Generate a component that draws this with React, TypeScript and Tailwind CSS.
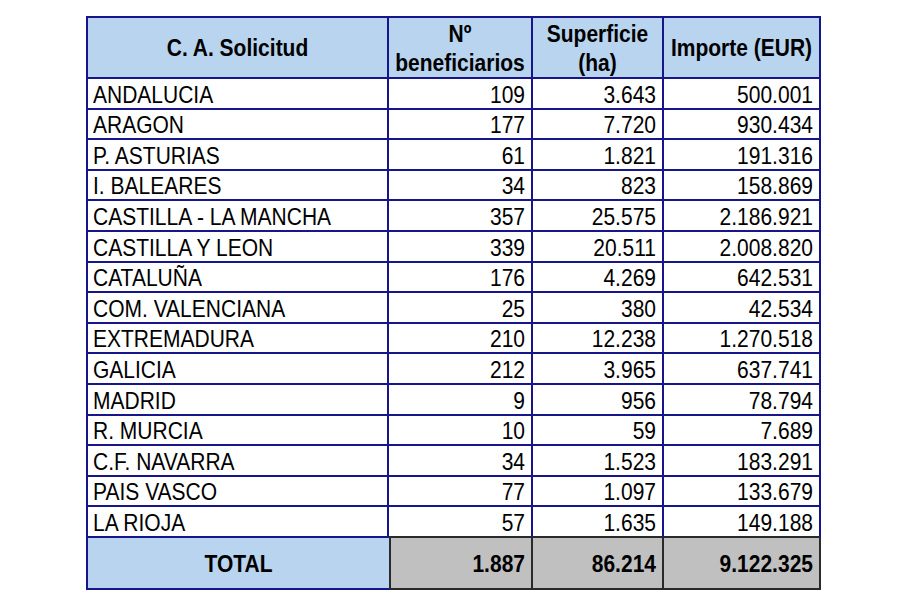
import React from "react";

const rows: [string, string, string, string][] = [
  ["ANDALUCIA", "109", "3.643", "500.001"],
  ["ARAGON", "177", "7.720", "930.434"],
  ["P. ASTURIAS", "61", "1.821", "191.316"],
  ["I. BALEARES", "34", "823", "158.869"],
  ["CASTILLA - LA MANCHA", "357", "25.575", "2.186.921"],
  ["CASTILLA Y LEON", "339", "20.511", "2.008.820"],
  ["CATALUÑA", "176", "4.269", "642.531"],
  ["COM. VALENCIANA", "25", "380", "42.534"],
  ["EXTREMADURA", "210", "12.238", "1.270.518"],
  ["GALICIA", "212", "3.965", "637.741"],
  ["MADRID", "9", "956", "78.794"],
  ["R. MURCIA", "10", "59", "7.689"],
  ["C.F. NAVARRA", "34", "1.523", "183.291"],
  ["PAIS VASCO", "77", "1.097", "133.679"],
  ["LA RIOJA", "57", "1.635", "149.188"],
];

const heights = [31, 30, 31, 30, 31, 31, 30, 31, 30, 31, 31, 30, 31, 30, 31];

function T({ children }: { children: React.ReactNode }) {
  return <span className="inline-block scale-y-[1.13]">{children}</span>;
}

export default function App() {
  return (
    <div
      className="w-[900px] h-[600px] bg-white pt-[16px] pl-[86px] text-black"
      style={{ fontFamily: '"Liberation Sans", Arial, sans-serif' }}
    >
      <div className="grid grid-cols-[303px_144px_131px_157px] w-[735px] text-[21px]">
        {/* header */}
        <div className="h-[63px] bg-[#b8d4ee] border-l-2 border-t-2 border-r-2 border-b-2 border-[#16168a] flex items-center justify-center font-bold leading-[29px]">
          <T>C. A. Solicitud</T>
        </div>
        <div className="h-[63px] bg-[#b8d4ee] border-t-2 border-r-2 border-b-2 border-[#16168a] flex flex-col items-center justify-center font-bold leading-[29px]">
          <T>Nº</T>
          <T>beneficiarios</T>
        </div>
        <div className="h-[63px] bg-[#b8d4ee] border-t-2 border-r-2 border-b-2 border-[#16168a] flex flex-col items-center justify-center font-bold leading-[29px]">
          <T>Superficie</T>
          <T>(ha)</T>
        </div>
        <div className="h-[63px] bg-[#b8d4ee] border-t-2 border-r-2 border-b-2 border-[#16168a] flex items-center justify-center font-bold leading-[29px]">
          <T>Importe (EUR)</T>
        </div>

        {rows.map((r, i) => {
          const last = i === rows.length - 1;
          const h = heights[i];
          return (
            <React.Fragment key={r[0]}>
              <div
                className="border-l-2 border-r-2 border-b-2 border-[#16168a] flex items-center pl-[5px] leading-none pt-[1px]"
                style={{ height: h }}
              >
                <T>{r[0]}</T>
              </div>
              {[1, 2, 3].map((c) => (
                <div
                  key={c}
                  className={
                    "border-r-2 border-b-2 border-r-[#16168a] flex items-center justify-end pr-[6px] leading-none pt-[1px] " +
                    (last ? "border-b-[#2a2a2a]" : "border-b-[#16168a]")
                  }
                  style={{ height: h }}
                >
                  <T>{r[c]}</T>
                </div>
              ))}
            </React.Fragment>
          );
        })}

        {/* total */}
        <div className="h-[52px] bg-[#b8d4ee] border-l-2 border-b-2 border-[#16168a] flex items-center justify-center font-bold pt-[1px]">
          <T>TOTAL</T>
        </div>
        <div className="h-[52px] bg-[#c0c0c0] border-l-2 border-r-2 border-b-2 border-[#2a2a2a] flex items-center justify-end pr-[6px] font-bold pt-[1px]">
          <T>1.887</T>
        </div>
        <div className="h-[52px] bg-[#c0c0c0] border-r-2 border-b-2 border-[#2a2a2a] flex items-center justify-end pr-[6px] font-bold pt-[1px]">
          <T>86.214</T>
        </div>
        <div className="h-[52px] bg-[#c0c0c0] border-r-2 border-b-2 border-[#2a2a2a] flex items-center justify-end pr-[6px] font-bold pt-[1px]">
          <T>9.122.325</T>
        </div>
      </div>
    </div>
  );
}
